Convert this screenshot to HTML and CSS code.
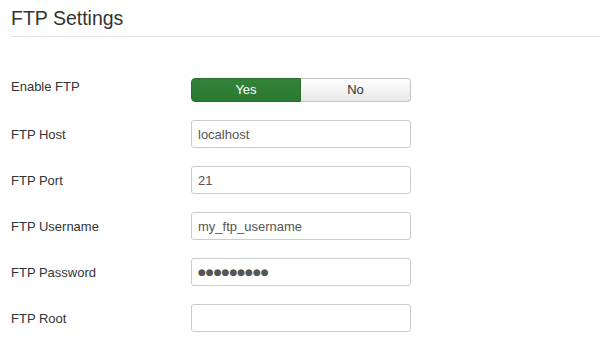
FILE: index.html
```html
<!DOCTYPE html>
<html>
<head>
<meta charset="utf-8">
<title>FTP Settings</title>
<link rel="stylesheet" href="styles.css">
</head>
<body>
<div class="page">
  <h3 class="title">FTP Settings</h3>
  <hr class="rule">
  <form class="form">
    <div class="row row-toggle">
      <label class="label">Enable FTP</label>
      <div class="toggle">
        <span class="tbtn tbtn-yes">Yes</span>
        <span class="tbtn tbtn-no">No</span>
      </div>
    </div>
    <div class="row">
      <label class="label">FTP Host</label>
      <input class="field" type="text" value="localhost">
    </div>
    <div class="row">
      <label class="label">FTP Port</label>
      <input class="field" type="text" value="21">
    </div>
    <div class="row">
      <label class="label">FTP Username</label>
      <input class="field" type="text" value="my_ftp_username">
    </div>
    <div class="row">
      <label class="label">FTP Password</label>
      <input class="field field-pass" type="text" value="●●●●●●●●●">
    </div>
    <div class="row">
      <label class="label">FTP Root</label>
      <input class="field" type="text" value="">
    </div>
  </form>
</div>
</body>
</html>
```
FILE: styles.css
```css
html, body {
  margin: 0;
  padding: 0;
  background: #fff;
}
body {
  font-family: "Liberation Sans", Arial, sans-serif;
  font-size: 13px;
  color: #333;
}
.page {
  padding-left: 11px;
}
.title {
  margin: 6px 0 0 0;
  font-size: 19.5px;
  line-height: 24px;
  font-weight: normal;
  color: #333;
}
.rule {
  margin: 6px 0 0 0;
  border: 0;
  border-top: 1px solid #e3e3e3;
  height: 0;
}
.form {
  margin-top: 41px;
}
.row {
  display: flex;
  align-items: flex-start;
  margin-bottom: 18px;
}
.label {
  width: 180px;
  flex: none;
  padding-top: 6px;
  line-height: 18px;
  color: #333;
}
.row-toggle .label {
  padding-top: 0;
}
.toggle {
  display: flex;
  width: 220px;
  height: 24px;
}
.tbtn {
  box-sizing: border-box;
  height: 24px;
  line-height: 22px;
  text-align: center;
  font-size: 13px;
}
.tbtn-yes {
  width: 110px;
  color: #fff;
  background: linear-gradient(#33823a, #2c7a30);
  border: 1px solid #2a6e2d;
  border-radius: 4px 0 0 4px;
}
.tbtn-no {
  width: 110px;
  color: #333;
  background: linear-gradient(#ffffff, #e8e8e8);
  border: 1px solid #c4c4c4;
  border-left: 0;
  border-radius: 0 4px 4px 0;
}
.field {
  box-sizing: border-box;
  width: 220px;
  height: 28px;
  margin: 0;
  padding: 4px 6px;
  border: 1px solid #ccc;
  border-radius: 3px;
  font-family: "Liberation Sans", Arial, sans-serif;
  font-size: 13px;
  line-height: 18px;
  color: #555;
  background: #fff;
  outline: none;
}
.field-pass {
  font-family: "DejaVu Sans", sans-serif;
  font-size: 9px;
  letter-spacing: 0;
  color: #555;
}
```
